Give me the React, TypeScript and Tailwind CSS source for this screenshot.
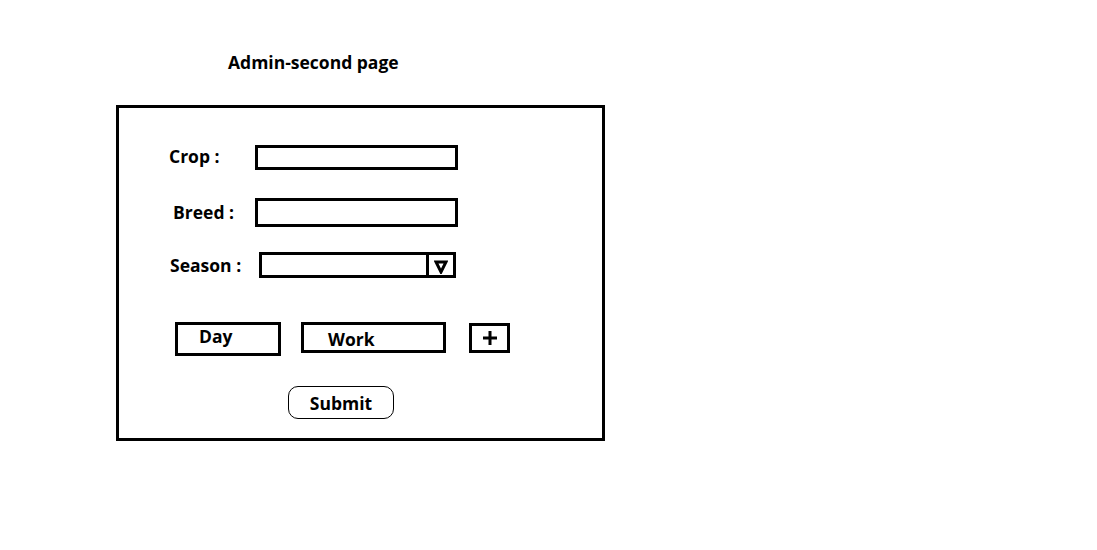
const font = "font-['Open_Sans',sans-serif] font-bold text-black";

const App = () => {
  return (
    <div className={`w-[1097px] h-[550px] bg-white ${font}`}>
      <div className="pt-[50px] pl-[228px] text-[17.5px] leading-[24px]">
        Admin-second page
      </div>
      <div className="ml-[116px] mt-[31px] w-[489px] h-[336px] border-[3px] border-black flex flex-col">
        <div className="mt-[37px] flex items-center">
          <div className="pl-[50px] w-[136px] text-[17.5px] -mt-[3px]">Crop :</div>
          <div className="w-[203px] h-[25px] border-[3px] border-black" />
        </div>
        <div className="mt-[28px] flex items-center">
          <div className="pl-[54px] w-[136px] text-[17.5px]">Breed :</div>
          <div className="w-[203px] h-[29px] border-[3px] border-black" />
        </div>
        <div className="mt-[25px] flex items-center">
          <div className="pl-[51px] w-[140px] text-[17.5px]">Season :</div>
          <div className="w-[197px] h-[26px] border-[3px] border-black flex justify-end">
            <div className="w-[27px] h-[23px] border-l-[3px] border-black flex items-center justify-center">
              <svg width="14" height="14" viewBox="0 0 14 14">
                <polygon
                  points="2,2 12,2 7,12"
                  fill="none"
                  stroke="black"
                  strokeWidth="3"
                  strokeLinejoin="miter"
                />
              </svg>
            </div>
          </div>
        </div>
        <div className="mt-[44px] flex items-start pl-[56px]">
          <div className="w-[106px] h-[34px] border-[3px] border-black pl-[21px] text-[17.5px] leading-[20px] pt-[1px]">
            Day
          </div>
          <div className="ml-[20px] w-[145px] h-[31px] border-[3px] border-black pl-[24px] text-[17.5px] leading-[24px] pt-[2px]">
            Work
          </div>
          <div className="ml-[23px] mt-[1px] w-[41px] h-[30px] border-[3px] border-black flex items-center justify-center">
            <svg width="16" height="16" viewBox="0 0 16 16">
              <path d="M8 1v14M1 8h14" stroke="black" strokeWidth="3" />
            </svg>
          </div>
        </div>
        <div className="mt-[30px] pl-[169px]">
          <button className="w-[106px] h-[33px] border border-black rounded-[10px] text-[17.5px] flex items-center justify-center">
            Submit
          </button>
        </div>
      </div>
    </div>
  );
};

export default App;
